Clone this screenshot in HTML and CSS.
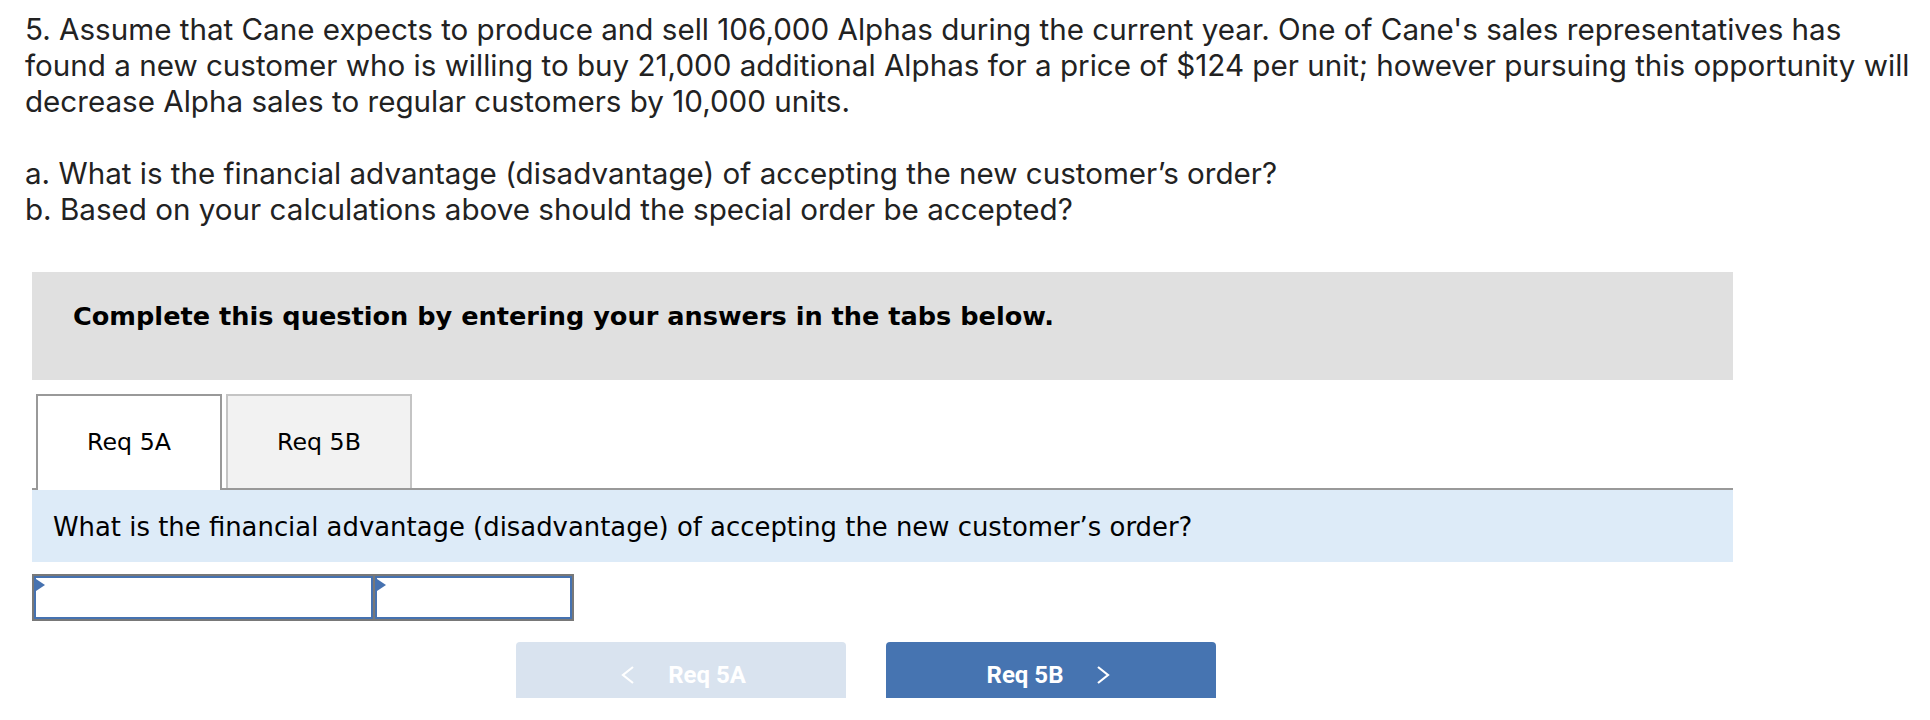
FILE: index.html
```html
<!DOCTYPE html>
<html lang="en">
<head>
<meta charset="utf-8">
<title>Req 5A</title>
<link rel="stylesheet" href="styles.css">
</head>
<body>
<div class="page">
  <p class="problem">5. Assume that Cane expects to produce and sell 106,000 Alphas during the current year. One of Cane's sales representatives has<br>found a new customer who is willing to buy 21,000 additional Alphas for a price of $124 per unit; however pursuing this opportunity will<br>decrease Alpha sales to regular customers by 10,000 units.<br><br>a. What is the financial advantage (disadvantage) of accepting the new customer’s order?<br>b. Based on your calculations above should the special order be accepted?</p>

  <div class="work">
    <div class="instructions">Complete this question by entering your answers in the tabs below.</div>

    <div class="tabs">
      <div class="tab tab-active">Req 5A</div>
      <div class="tab tab-idle">Req 5B</div>
    </div>

    <div class="prompt">What is the financial advantage (disadvantage) of accepting the new customer’s order?</div>

    <div class="answer">
      <div class="cell cell-wide"><span class="flag"></span></div>
      <div class="cell cell-narrow"><span class="flag"></span></div>
    </div>

    <div class="nav">
      <div class="btn btn-prev">
        <svg class="chev" width="14" height="18" viewBox="0 0 14 18"><polyline points="12,1 2,9 12,17" fill="none" stroke="#fff" stroke-width="2.2"/></svg>
        <span class="btn-label">Req 5A</span>
      </div>
      <div class="btn btn-next">
        <span class="btn-label">Req 5B</span>
        <svg class="chev" width="14" height="18" viewBox="0 0 14 18"><polyline points="2,1 12,9 2,17" fill="none" stroke="#fff" stroke-width="2.2"/></svg>
      </div>
    </div>
  </div>
</div>
</body>
</html>
```

FILE: styles.css
```css
html, body {
  margin: 0;
  padding: 0;
  background: #fff;
}

.page {
  padding: 11px 0 0 25px;
}

.problem {
  margin: 0;
  white-space: nowrap;
  font-family: "Inter", "Lato", sans-serif;
  font-size: 29.6px;
  font-variant-ligatures: none;
  line-height: 36px;
  color: #222;
}

.work {
  margin: 45px 0 0 7px;
  width: 1701px;
}

.instructions {
  height: 108px;
  box-sizing: border-box;
  background: #e0e0e0;
  padding: 29px 0 0 41px;
  font-family: "DejaVu Sans", Verdana, sans-serif;
  font-weight: bold;
  font-size: 25.6px;
  line-height: 30px;
  color: #000;
}

.tabs {
  display: flex;
  gap: 4px;
  margin-top: 14px;
  padding-left: 4px;
  border-bottom: 2px solid #999;
  height: 94px;
}

.tab {
  width: 186px;
  height: 96px;
  box-sizing: border-box;
  padding-top: 32px;
  text-align: center;
  font-family: "DejaVu Sans", Verdana, sans-serif;
  font-size: 23.7px;
  line-height: 28px;
  color: #000;
}

.tab-active {
  background: #fff;
  border: 2px solid #999;
  border-bottom: none;
}

.tab-idle {
  background: #f2f2f2;
  border: 2px solid #c4c4c4;
  border-bottom: none;
  height: 94px;
}

.prompt {
  height: 72px;
  box-sizing: border-box;
  background: #ddebf8;
  padding: 22px 0 0 21px;
  font-family: "DejaVu Sans", Verdana, sans-serif;
  font-size: 25.9px;
  line-height: 30px;
  color: #000;
}

.answer {
  display: flex;
  gap: 2px;
  width: 542px;
  height: 47px;
  box-sizing: border-box;
  margin-top: 12px;
  padding: 2px;
  background: #787878;
}

.cell {
  position: relative;
  background: #fff;
  border: 2px solid #4672b0;
}

.cell-wide {
  width: 339px;
  box-sizing: border-box;
}

.cell-narrow {
  flex: 1;
}

.flag {
  position: absolute;
  left: 0;
  top: 1px;
  width: 0;
  height: 0;
  border-left: 9px solid #4672b0;
  border-top: 6.5px solid transparent;
  border-bottom: 6.5px solid transparent;
}

.nav {
  display: flex;
  gap: 40px;
  margin: 21px 0 0 484px;
}

.btn {
  width: 330px;
  height: 56px;
  box-sizing: border-box;
  border-radius: 4px 4px 0 0;
  display: flex;
  align-items: flex-start;
  justify-content: center;
  gap: 33px;
  font-family: "Roboto", sans-serif;
  font-weight: bold;
  font-size: 24px;
  color: #fff;
}

.btn-label {
  margin-top: 19px;
  line-height: 28px;
}

.chev {
  margin-top: 24px;
}

.btn-prev {
  background: #d9e3ef;
  padding-left: 5px;
}

.btn-next {
  background: #4674b1;
  padding-right: 5px;
}
```
